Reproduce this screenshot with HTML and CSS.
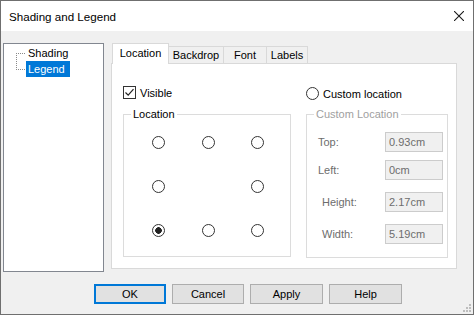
FILE: index.html
```html
<!DOCTYPE html>
<html lang="en">
<head>
	<meta charset="UTF-8">
	<title>Shading and Legend</title>
	<link rel="stylesheet" href="styles.css">
</head>
<body>
	<div class="window">
		<div class="titlebar">
			<span class="title">Shading and Legend</span>
			<svg class="close" width="10" height="10" viewBox="0 0 10 10">
				<path d="M0 0L10 10M10 0L0 10" stroke="#1a1a1a" stroke-width="1.1" fill="none"/>
			</svg>
		</div>
		<div class="client">
			<div class="main">
				<div class="tree">
					<svg class="lines" width="10" height="32" viewBox="0 0 10 32">
						<path d="M0.5 8V24.5M0 8.5H10M0 24.5H10" stroke="#8a8a8a" stroke-width="1" stroke-dasharray="1 1" fill="none"/>
					</svg>
					<div class="nodes">
						<div class="node">Shading</div>
						<div class="node sel">Legend</div>
					</div>
				</div>
				<div class="tabctl">
					<div class="tabstrip">
						<div class="tab active t1">Location</div>
						<div class="tab t2">Backdrop</div>
						<div class="tab t3">Font</div>
						<div class="tab t4">Labels</div>
					</div>
					<div class="panel">
						<label class="opt">
							<span class="checkbox">
								<svg width="11" height="11" viewBox="0 0 11 11"><path d="M1.5 5.5L4.2 8.2L9.5 2.2" stroke="#222" stroke-width="1.2" fill="none"/></svg>
							</span>Visible
						</label>
						<label class="opt opt-radio">
							<span class="radio"></span>Custom location
						</label>

						<div class="group">
							<span class="legend">Location</span>
							<div class="radiogrid">
								<span class="radio"></span><span class="radio"></span><span class="radio"></span>
								<span class="radio"></span><span></span><span class="radio"></span>
								<span class="radio on"></span><span class="radio"></span><span class="radio"></span>
							</div>
						</div>

						<div class="group disabled">
							<span class="legend">Custom Location</span>
							<div class="field f-top"><span class="lbl">Top:</span><span class="box">0.93cm</span></div>
							<div class="field"><span class="lbl">Left:</span><span class="box">0cm</span></div>
							<div class="field wide"><span class="lbl">Height:</span><span class="box">2.17cm</span></div>
							<div class="field wide"><span class="lbl">Width:</span><span class="box">5.19cm</span></div>
						</div>
					</div>
				</div>
			</div>
			<div class="buttons">
				<div class="btn default">OK</div>
				<div class="btn">Cancel</div>
				<div class="btn wide">Apply</div>
				<div class="btn wide">Help</div>
			</div>
			<svg class="grip" width="9" height="9" viewBox="0 0 9 9">
				<g fill="#bdbdbd">
					<rect x="6" y="0" width="2" height="2"/>
					<rect x="3" y="3" width="2" height="2"/><rect x="6" y="3" width="2" height="2"/>
					<rect x="0" y="6" width="2" height="2"/><rect x="3" y="6" width="2" height="2"/><rect x="6" y="6" width="2" height="2"/>
				</g>
			</svg>
		</div>
	</div>
</body>
</html>
```

FILE: styles.css
```css
* {
    box-sizing: border-box;
}

body {
    margin: 0;
    font-family: "Liberation Sans", Arial, sans-serif;
    font-size: 11px;
    color: #000;
}

.window {
    width: 474px;
    height: 315px;
    border: 1px solid #6f6f6f;
    background-color: #f0f0f0;
    display: flex;
    flex-direction: column;
}

.titlebar {
    height: 30px;
    background-color: #fff;
    display: flex;
    align-items: center;
    justify-content: space-between;
    padding: 0 9px 0 8px;
}

.title {
    font-size: 11.6px;
    color: #000;
}

.client {
    flex: 1;
    position: relative;
}

.main {
    display: flex;
    gap: 7px;
    padding: 12px 0 0 2px;
}

/* tree view */
.tree {
    width: 101px;
    height: 229px;
    border: 1px solid #828790;
    background-color: #fff;
    display: flex;
    align-items: flex-start;
    padding: 1px 0 0 12px;
}

.tree .nodes {
    display: flex;
    flex-direction: column;
}

.tree .node {
    height: 16px;
    line-height: 16px;
    padding: 0 2px;
}

.tree .node.sel {
    background-color: #0078d7;
    color: #fff;
}

/* tab control */
.tabctl {
    width: 346px;
    display: flex;
    flex-direction: column;
}

.tabstrip {
    display: flex;
    align-items: flex-end;
    height: 20px;
    padding-left: 1px;
}

.tab {
    height: 17px;
    line-height: 16px;
    text-align: center;
    background-color: #f0f0f0;
    border: 1px solid #d9d9d9;
    border-bottom: none;
    margin-left: -1px;
}

.tab.t1 { width: 57px; margin-left: 0; }
.tab.t2 { width: 56px; }
.tab.t3 { width: 44px; }
.tab.t4 { width: 42px; }

.tab.active {
    height: 21px;
    line-height: 19px;
    margin-bottom: -1px;
    background-color: #fff;
    position: relative;
    z-index: 1;
}

.panel {
    height: 206px;
    background-color: #fff;
    border: 1px solid #d9d9d9;
    display: grid;
    grid-template-columns: 168px 142px;
    grid-template-rows: 13px auto;
    column-gap: 15px;
    row-gap: 15px;
    padding: 22px 0 0 11px;
    align-items: start;
}

.opt {
    display: flex;
    align-items: center;
    gap: 4px;
    height: 13px;
}

.opt-radio {
    margin-top: 1px;
}

.checkbox {
    width: 13px;
    height: 13px;
    border: 1px solid #333;
    background-color: #fff;
    display: flex;
    align-items: center;
    justify-content: center;
}

.radio {
    display: block;
    width: 13px;
    height: 13px;
    border: 1px solid #333;
    border-radius: 50%;
    background-color: #fff;
}

.radio.on {
    background: radial-gradient(circle, #222 3px, #fff 3.6px);
}

/* group boxes */
.group {
    border: 1px solid #dcdcdc;
    height: 143px;
}

.group.disabled {
    height: 144px;
    color: #6d6d6d;
}

.legend {
    display: block;
    width: max-content;
    line-height: 13px;
    margin: -7px 0 0 7px;
    padding: 0 2px;
    background-color: #fff;
    color: #000;
}

.group.disabled .legend {
    color: #a0a0a0;
}

.radiogrid {
    display: grid;
    grid-template-columns: 50px 49px 13px;
    grid-template-rows: 44px 44px 13px;
    margin: 15px 0 0 28px;
}

.field {
    display: flex;
    align-items: center;
    height: 20px;
    margin-top: 12px;
    padding-left: 11px;
}

.field.f-top {
    margin-top: 11px;
}

.field.f-top + .field {
    margin-top: 8px;
}

.field.wide {
    padding-left: 15px;
}

.field .lbl {
    flex: 1;
}

.field .box {
    width: 58px;
    height: 20px;
    line-height: 18px;
    margin-right: 4px;
    padding-left: 3px;
    border: 1px solid #cccccc;
    background-color: #f0f0f0;
    color: #6d6d6d;
}

/* dialog buttons */
.buttons {
    display: flex;
    gap: 6px;
    margin-top: 12px;
    padding-left: 93px;
}

.btn {
    width: 72px;
    height: 20px;
    line-height: 18px;
    text-align: center;
    background-color: #e1e1e1;
    border: 1px solid #adadad;
}

.btn.wide {
    width: 73px;
}

.btn.default {
    border: 2px solid #0078d7;
    line-height: 16px;
}

.grip {
    position: absolute;
    right: 1px;
    bottom: 1px;
}
```
